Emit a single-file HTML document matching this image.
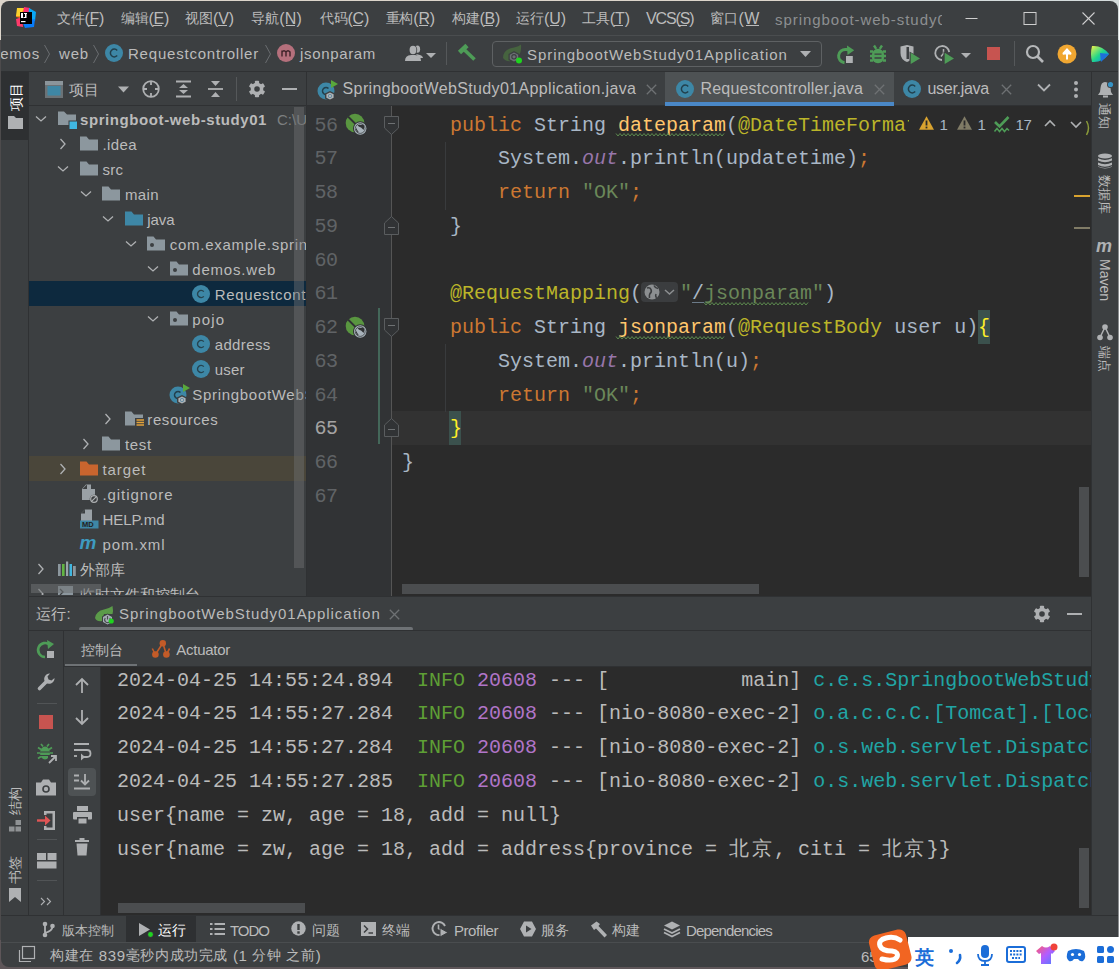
<!DOCTYPE html>
<html><head><meta charset="utf-8">
<style>
*{margin:0;padding:0;box-sizing:border-box}
html,body{width:1119px;height:969px;overflow:hidden;background:#dcd5cb}
body{position:relative;font-family:"Liberation Sans",sans-serif;color:#bbbbbb}
.a{position:absolute;overflow:visible}
.t{position:absolute;white-space:nowrap}
.m{font-family:"Liberation Mono",monospace;white-space:pre}
</style></head><body>
<div class="a" style="left:0px;top:0px;width:1119px;height:969px;background:#5e5659"></div>
<div class="a" style="left:0px;top:0px;width:1119px;height:40px;background:#dcd5cb"></div>
<div class="a" style="left:820px;top:0px;width:299px;height:40px;background:#d5dcdc"></div>
<div class="a" style="left:0px;top:40px;width:1px;height:900px;background:#4d4b4c"></div>
<div class="a" style="left:1118px;top:40px;width:1px;height:900px;background:#8a8d8f"></div>
<div class="a" style="left:1px;top:1px;width:1117px;height:966px;background:#3c3f41;border-radius:8px"></div>
<div class="a" style="left:1px;top:35px;width:1117px;height:1px;background:#4a4d4f"></div>
<svg class="a" style="left:15px;top:7px" width="22" height="22" viewBox="0 0 22 22">
<polygon points="3,2 11,1 14,6 6,11 1,10" fill="#fc8a1c"/>
<polygon points="2,1 9,1 5,9 1,9" fill="#fcd22e"/>
<polygon points="9,0 15,1 16,7 8,9" fill="#fe2e71"/>
<polygon points="14,1 21,5 20,14 13,12" fill="#0aa8f5"/>
<polygon points="1,12 7,10 8,20 2,19" fill="#fe3a6a"/>
<polygon points="7,14 20,12 19,20 10,21" fill="#087cfa"/>
<rect x="5" y="5" width="12" height="12" fill="#000"/>
<rect x="6" y="6" width="2" height="5" fill="#fff"/><rect x="9" y="6" width="3" height="1" fill="#fff"/>
<rect x="10" y="6" width="1.5" height="5" fill="#fff"/><rect x="8.5" y="10" width="2.5" height="1" fill="#fff"/>
<rect x="6" y="14" width="4.5" height="1.2" fill="#fff"/>
</svg>
<div class="t" style="left:57.00px;top:6.66px;font-size:16px;color:#bbbbbb;line-height:24px;letter-spacing:-0.286px"><span style="font-size:14px;position:relative;top:-0.5px">文件</span>(F)</div>
<div class="a" style="left:88px;top:25px;width:9px;height:1px;background:#bbbbbb"></div>
<div class="t" style="left:121.00px;top:6.66px;font-size:16px;color:#bbbbbb;line-height:24px;letter-spacing:-0.266px"><span style="font-size:14px;position:relative;top:-0.5px">编辑</span>(E)</div>
<div class="a" style="left:153px;top:25px;width:9px;height:1px;background:#bbbbbb"></div>
<div class="t" style="left:185.00px;top:6.66px;font-size:16px;color:#bbbbbb;line-height:24px;letter-spacing:-0.066px"><span style="font-size:14px;position:relative;top:-0.5px">视图</span>(V)</div>
<div class="a" style="left:218px;top:25px;width:9px;height:1px;background:#bbbbbb"></div>
<div class="t" style="left:251.00px;top:6.66px;font-size:16px;color:#bbbbbb;line-height:24px;letter-spacing:0.158px"><span style="font-size:14px;position:relative;top:-0.5px">导航</span>(N)</div>
<div class="a" style="left:286px;top:25px;width:9px;height:1px;background:#bbbbbb"></div>
<div class="t" style="left:320.00px;top:6.66px;font-size:16px;color:#bbbbbb;line-height:24px;letter-spacing:-0.242px"><span style="font-size:14px;position:relative;top:-0.5px">代码</span>(C)</div>
<div class="a" style="left:353px;top:25px;width:9px;height:1px;background:#bbbbbb"></div>
<div class="t" style="left:385.50px;top:6.66px;font-size:16px;color:#bbbbbb;line-height:24px;letter-spacing:-0.142px"><span style="font-size:14px;position:relative;top:-0.5px">重构</span>(R)</div>
<div class="a" style="left:419px;top:25px;width:9px;height:1px;background:#bbbbbb"></div>
<div class="t" style="left:452.00px;top:6.66px;font-size:16px;color:#bbbbbb;line-height:24px;letter-spacing:-0.266px"><span style="font-size:14px;position:relative;top:-0.5px">构建</span>(B)</div>
<div class="a" style="left:484px;top:25px;width:9px;height:1px;background:#bbbbbb"></div>
<div class="t" style="left:516.00px;top:6.66px;font-size:16px;color:#bbbbbb;line-height:24px;letter-spacing:-0.042px"><span style="font-size:14px;position:relative;top:-0.5px">运行</span>(U)</div>
<div class="a" style="left:550px;top:25px;width:9px;height:1px;background:#bbbbbb"></div>
<div class="t" style="left:582.00px;top:6.66px;font-size:16px;color:#bbbbbb;line-height:24px;letter-spacing:-0.086px"><span style="font-size:14px;position:relative;top:-0.5px">工具</span>(T)</div>
<div class="a" style="left:614px;top:25px;width:9px;height:1px;background:#bbbbbb"></div>
<div class="t" style="left:646.00px;top:6.66px;font-size:16px;color:#bbbbbb;line-height:24px;letter-spacing:-1.122px">VCS(S)</div>
<div class="a" style="left:678px;top:25px;width:9px;height:1px;background:#bbbbbb"></div>
<div class="t" style="left:710.00px;top:6.66px;font-size:16px;color:#bbbbbb;line-height:24px;letter-spacing:0.268px"><span style="font-size:14px;position:relative;top:-0.5px">窗口</span>(W</div>
<div class="a" style="left:746px;top:25px;width:13px;height:1px;background:#bbbbbb"></div>
<div style="position:absolute;left:774px;top:0;width:168px;height:35px;overflow:hidden">
<div class="t" style="left:1.00px;top:7.60px;font-size:15px;color:#8d8f91;line-height:24px;letter-spacing:0.950px">springboot-web-study01</div>
</div>
<svg class="a" style="left:960px;top:10px" width="140" height="16" viewBox="0 0 140 16">
<line x1="5.5" y1="8.5" x2="17.5" y2="8.5" stroke="#cfcfcf" stroke-width="1"/>
<rect x="64" y="2.5" width="12" height="12" fill="none" stroke="#cfcfcf" stroke-width="1"/>
<line x1="122.5" y1="2.5" x2="134.5" y2="14.5" stroke="#cfcfcf" stroke-width="1.1"/>
<line x1="134.5" y1="2.5" x2="122.5" y2="14.5" stroke="#cfcfcf" stroke-width="1.1"/>
</svg>
<div class="a" style="left:1px;top:71px;width:1117px;height:1px;background:#2f3133"></div>
<div style="position:absolute;left:1px;top:36px;width:400px;height:35px;overflow:hidden">
<div class="t" style="left:-10.00px;top:5.70px;font-size:15px;color:#bbbbbb;line-height:24px;letter-spacing:0.795px">demos</div>
</div>
<svg class="a" style="left:43px;top:44px" width="8" height="20" viewBox="0 0 8 20"><polyline points="1.5,1 6.5,10 1.5,19" fill="none" stroke="#6a6d70" stroke-width="1"/></svg>
<div class="t" style="left:59.00px;top:41.70px;font-size:15px;color:#bbbbbb;line-height:24px;letter-spacing:0.827px">web</div>
<svg class="a" style="left:92px;top:44px" width="8" height="20" viewBox="0 0 8 20"><polyline points="1.5,1 6.5,10 1.5,19" fill="none" stroke="#6a6d70" stroke-width="1"/></svg>
<svg class="a" style="left:105px;top:44.2px" width="18" height="18" viewBox="0 0 18 18"><circle cx="9" cy="9" r="9" fill="#3d87a6"/><path d="M12.2,6.4 A3.9,3.9 0 1,0 12.2,11.6" fill="none" stroke="#22404d" stroke-width="1.5"/></svg>
<div class="t" style="left:128.00px;top:41.70px;font-size:15px;color:#bbbbbb;line-height:24px;letter-spacing:0.790px">Requestcontroller</div>
<svg class="a" style="left:264px;top:44px" width="8" height="20" viewBox="0 0 8 20"><polyline points="1.5,1 6.5,10 1.5,19" fill="none" stroke="#6a6d70" stroke-width="1"/></svg>
<svg class="a" style="left:277px;top:44.2px" width="18" height="18" viewBox="0 0 18 18"><circle cx="9" cy="9" r="9" fill="#b5707c"/><path d="M5,12.5 V6.5 M5,8 Q7,5.5 9,8 V12.5 M9,8 Q11,5.5 13,8 V12.5" fill="none" stroke="#3f2329" stroke-width="1.4"/></svg>
<div class="t" style="left:300.00px;top:41.70px;font-size:15px;color:#bbbbbb;line-height:24px;letter-spacing:0.663px">jsonparam</div>
<svg class="a" style="left:404px;top:45px" width="34" height="18" viewBox="0 0 34 18">
<ellipse cx="13.5" cy="4.2" rx="2.6" ry="3.6" fill="#aeb0b2"/><path d="M12,9 Q19,10 19,13 H15 Z" fill="#aeb0b2"/>
<ellipse cx="9" cy="5" rx="4.2" ry="4.8" fill="#3c3f41"/>
<ellipse cx="9" cy="5" rx="3.4" ry="4.2" fill="#aeb0b2"/><path d="M1,16 Q1,10.5 7,10 H11 Q17,10.5 17,16 Z" fill="#aeb0b2"/>
<polygon points="22,8 32,8 27,13" fill="#aeb0b2"/>
</svg>
<div class="a" style="left:446px;top:42px;width:1px;height:23px;background:#55585a"></div>
<svg class="a" style="left:456px;top:44px" width="22" height="20" viewBox="0 0 22 20"><path d="M3.5,8.5 L11,1.5" stroke="#4e9c57" stroke-width="4.6" stroke-linecap="butt"/><path d="M7.5,5 L18.5,15.5" stroke="#4e9c57" stroke-width="3.6"/></svg>
<div class="a" style="left:492px;top:41px;width:330px;height:26px;background:transparent;border:1px solid #5e6163;border-radius:4px"></div>
<svg class="a" style="left:502px;top:44px" width="22" height="20" viewBox="0 0 22 20">
<path d="M1,14 Q1,5 12,3.5 Q17,2.5 19,0.5 Q20,10 14,15 Q8,19 3,16 Z" fill="#46633f"/>
<polygon points="12,7 17.5,10 17.5,16 12,19 6.5,16 6.5,10" fill="#3c3f41"/>
<polygon points="12,8.5 16.2,10.8 16.2,15.2 12,17.5 7.8,15.2 7.8,10.8" fill="#6b7073"/>
<circle cx="12" cy="12.8" r="2.2" fill="none" stroke="#3c3f41" stroke-width="1.1"/>
<circle cx="17" cy="16.5" r="3" fill="#1fd41f"/></svg>
<div class="t" style="left:527.00px;top:42.70px;font-size:15px;color:#bbbbbb;line-height:24px;letter-spacing:0.941px">SpringbootWebStudy01Application</div>
<svg class="a" style="left:800px;top:50px" width="12" height="8" viewBox="0 0 12 8"><polygon points="0,1 11,1 5.5,7" fill="#aeb0b2"/></svg>
<svg class="a" style="left:834px;top:44px" width="22" height="21" viewBox="0 0 22 21">
<path d="M10.5,18.7 A6.5,6.5 0 0,1 12,5.5 L14,5.5" fill="none" stroke="#4e9c57" stroke-width="3"/>
<polygon points="13,1.5 20.2,6.2 13.5,11" fill="#4e9c57"/>
<rect x="12" y="12" width="6.8" height="7" fill="#afb1b3"/>
</svg>
<svg class="a" style="left:867px;top:44px" width="22" height="21" viewBox="0 0 22 21">
<ellipse cx="11" cy="12" rx="6.3" ry="7.3" fill="#4e9c57"/>
<path d="M3,7.5 H6 M19,7.5 H16 M3,12 H6 M19,12 H16 M3,16.5 H6 M19,16.5 H16 M7,1.5 L9.2,4.8 M15,1.5 L12.8,4.8" stroke="#4e9c57" stroke-width="2.4"/>
<path d="M7.5,10.2 H14.5 M7.5,14 H14.5" stroke="#3c3f41" stroke-width="1.3"/>
</svg>
<svg class="a" style="left:899px;top:44px" width="22" height="21" viewBox="0 0 22 21">
<path d="M1.5,2.5 L8,1 L14.5,2.5 V9 Q14.5,15.5 8,18 Q1.5,15.5 1.5,9 Z" fill="#afb1b3"/>
<rect x="7.5" y="3" width="2.5" height="12" fill="#3c3f41"/>
<polygon points="10.5,7.5 21.5,14 10.5,20.5" fill="#3c3f41"/>
<polygon points="11.7,8.8 21,14.5 11.7,20" fill="#4e9c57"/>
</svg>
<svg class="a" style="left:933px;top:44px" width="40" height="21" viewBox="0 0 40 21">
<path d="M9,16 A7,7 0 1,1 16.2,8" fill="none" stroke="#afb1b3" stroke-width="1.8"/>
<path d="M10.5,5 L10.5,9.5 L8,12.5" fill="none" stroke="#afb1b3" stroke-width="1.5"/>
<polygon points="10.5,7.5 21.5,14 10.5,20.5" fill="#3c3f41"/>
<polygon points="11.7,8.8 21,14.5 11.7,20" fill="#4e9c57"/>
<polygon points="28,9 38,9 33,14" fill="#afb1b3"/>
</svg>
<div class="a" style="left:987px;top:47px;width:13px;height:13px;background:#c75450"></div>
<div class="a" style="left:1014px;top:41px;width:1px;height:25px;background:#55585a"></div>
<svg class="a" style="left:1025px;top:44px" width="22" height="20" viewBox="0 0 22 20"><circle cx="8" cy="8" r="6" fill="none" stroke="#b6b8ba" stroke-width="2.2"/><path d="M12.5,12.5 L18,18" stroke="#b6b8ba" stroke-width="2.6"/></svg>
<svg class="a" style="left:1057px;top:44px" width="20" height="20" viewBox="0 0 20 20"><circle cx="10" cy="10" r="9.5" fill="#f0a732"/><path d="M10,15.5 V6.5 M6,10 L10,5.5 L14,10" fill="none" stroke="#fff" stroke-width="2"/><polygon points="5.5,10.5 10,5 14.5,10.5" fill="#fff"/></svg>
<svg class="a" style="left:1090px;top:44px" width="20" height="20" viewBox="0 0 20 20">
<defs><linearGradient id="tb" x1="0" y1="0" x2="1" y2="1"><stop offset="0" stop-color="#f5f04a"/><stop offset="0.5" stop-color="#21d789"/><stop offset="1" stop-color="#087cfa"/></linearGradient></defs>
<path d="M2,2 Q12,1 19,10 Q12,19 2,18 Q0,10 2,2 Z" fill="url(#tb)"/>
<path d="M10,9 L19,10 L11,18 Z" fill="#1f6fd8"/>
</svg>
<div class="a" style="left:28px;top:72px;width:1px;height:844px;background:#2f3133"></div>
<div class="a" style="left:1px;top:72px;width:27px;height:68px;background:#2e3032"></div>
<div class="t" style="left:16.5px;top:96.5px;width:0;height:0"><div style="position:absolute;left:0;top:0;transform:translate(-50%,-50%) rotate(-90deg);font-size:13.5px;line-height:15.5px;color:#ffffff;white-space:nowrap"><span style="font-size:13.5px;position:relative;top:-0.5px">项目</span></div></div>
<svg class="a" style="left:8px;top:116px" width="15" height="13" viewBox="0 0 15 13"><path d="M0,0 H6 L8,2 H15 V13 H0 Z" fill="#afb1b3"/></svg>
<div class="t" style="left:16px;top:800.5px;width:0;height:0"><div style="position:absolute;left:0;top:0;transform:translate(-50%,-50%) rotate(-90deg);font-size:13.5px;line-height:15.5px;color:#bbbbbb;white-space:nowrap"><span style="font-size:13.5px;position:relative;top:-0.5px">结构</span></div></div>
<svg class="a" style="left:9px;top:820px" width="13" height="12" viewBox="0 0 13 12"><rect x="6.5" y="0" width="5.5" height="5" fill="#8f9294"/><rect x="0" y="6.5" width="5.5" height="5" fill="#8f9294"/><rect x="6.5" y="6.5" width="5.5" height="5" fill="#8f9294"/></svg>
<div class="t" style="left:16px;top:869.5px;width:0;height:0"><div style="position:absolute;left:0;top:0;transform:translate(-50%,-50%) rotate(-90deg);font-size:13.5px;line-height:15.5px;color:#bbbbbb;white-space:nowrap"><span style="font-size:13.5px;position:relative;top:-0.5px">书签</span></div></div>
<svg class="a" style="left:9px;top:888px" width="13" height="14" viewBox="0 0 13 14"><path d="M0,0 H12 V14 L6,9 L0,14 Z" fill="#afb1b3"/></svg>
<div class="a" style="left:29px;top:105px;width:277px;height:1px;background:#2f3133"></div>
<svg class="a" style="left:45px;top:81px" width="18" height="17" viewBox="0 0 18 17"><rect x="0" y="0" width="18" height="17" fill="#6b7276"/><rect x="0" y="0" width="18" height="4" fill="#8b959b"/><rect x="2.5" y="5" width="13" height="9.5" fill="#3e87a5"/></svg>
<div class="t" style="left:69.00px;top:78.30px;font-size:15px;color:#bbbbbb;line-height:24px"><span style="font-size:14.5px;position:relative;top:-0.5px">项目</span></div>
<svg class="a" style="left:118px;top:86px" width="12" height="8" viewBox="0 0 12 8"><polygon points="0,0.5 11,0.5 5.5,6.5" fill="#aeb0b2"/></svg>
<svg class="a" style="left:141px;top:79px" width="20" height="20" viewBox="0 0 20 20"><circle cx="10" cy="10" r="7.8" fill="none" stroke="#aeb0b2" stroke-width="1.8"/><path d="M10,2 V6 M10,14 V18 M2,10 H6 M14,10 H18" stroke="#aeb0b2" stroke-width="1.8"/></svg>
<svg class="a" style="left:175px;top:79px" width="18" height="20" viewBox="0 0 18 20"><path d="M1,2.5 H16 M1,17.5 H16" stroke="#aeb0b2" stroke-width="1.8"/><polygon points="8.5,5 13,9 4,9" fill="#aeb0b2"/><polygon points="8.5,15 13,11 4,11" fill="#aeb0b2"/></svg>
<svg class="a" style="left:207px;top:79px" width="18" height="20" viewBox="0 0 18 20"><path d="M1,10 H16" stroke="#aeb0b2" stroke-width="1.8"/><polygon points="8.5,7 13,2 4,2" fill="#aeb0b2"/><polygon points="8.5,13 13,18 4,18" fill="#aeb0b2"/></svg>
<div class="a" style="left:236px;top:77px;width:1px;height:24px;background:#55585a"></div>
<svg class="a" style="left:247px;top:79px" width="20" height="20" viewBox="0 0 20 20"><g transform="translate(10 10)"><rect x="-2.1" y="-8.2" width="4.2" height="5" rx="0.8" fill="#aeb0b2" transform="rotate(0)"/><rect x="-2.1" y="-8.2" width="4.2" height="5" rx="0.8" fill="#aeb0b2" transform="rotate(60)"/><rect x="-2.1" y="-8.2" width="4.2" height="5" rx="0.8" fill="#aeb0b2" transform="rotate(120)"/><rect x="-2.1" y="-8.2" width="4.2" height="5" rx="0.8" fill="#aeb0b2" transform="rotate(180)"/><rect x="-2.1" y="-8.2" width="4.2" height="5" rx="0.8" fill="#aeb0b2" transform="rotate(240)"/><rect x="-2.1" y="-8.2" width="4.2" height="5" rx="0.8" fill="#aeb0b2" transform="rotate(300)"/><circle cx="0" cy="0" r="6.3" fill="#aeb0b2"/><circle cx="0" cy="0" r="2.8" fill="#3c3f41"/></g></svg>
<div class="a" style="left:282px;top:88px;width:15px;height:2.4px;background:#aeb0b2"></div>
<div class="a" style="left:29px;top:281px;width:277px;height:25px;background:#0d293e"></div>
<div class="a" style="left:29px;top:456px;width:277px;height:25px;background:#4a463a"></div>
<div style="position:absolute;left:29px;top:106px;width:277px;height:489px;overflow:hidden">
<svg class="a" style="left:5.899999999999999px;top:8.5px" width="12" height="8" viewBox="0 0 12 8"><polyline points="1,1.5 6,6 11,1.5" fill="none" stroke="#afb1b3" stroke-width="1.3"/></svg>
<svg class="a" style="left:28.5px;top:4.5px" width="20" height="19" viewBox="0 0 20 19"><path d="M0,0.5 H6 L9,3.5 H18 V14 H0 Z" fill="#8c979e"/><rect x="10.5" y="9.5" width="9" height="9" fill="#3c3f41"/><rect x="11.5" y="10.5" width="7.5" height="7.5" fill="#40b6e0"/></svg>
<div class="t" style="left:51.00px;top:2.30px;font-size:15px;color:#bbbbbb;line-height:24px;letter-spacing:0.583px;font-weight:bold">springboot-web-study01</div>
<div class="t" style="left:248.00px;top:2.30px;font-size:15px;color:#7d7f80;line-height:24px">C:\Users\zw\IdeaProjects</div>
<svg class="a" style="left:30.349999999999994px;top:31.5px" width="8" height="12" viewBox="0 0 8 12"><polyline points="1.5,1 6,6 1.5,11" fill="none" stroke="#afb1b3" stroke-width="1.3"/></svg>
<svg class="a" style="left:50.95px;top:30.0px" width="19" height="15" viewBox="0 0 19 15"><path d="M0,0.5 H6.5 L9,3.5 H18 V14.5 H0 Z" fill="#8c979e"/></svg>
<div class="t" style="left:73.45px;top:27.30px;font-size:15px;color:#bbbbbb;line-height:24px;letter-spacing:0.414px">.idea</div>
<svg class="a" style="left:28.349999999999994px;top:58.5px" width="12" height="8" viewBox="0 0 12 8"><polyline points="1,1.5 6,6 11,1.5" fill="none" stroke="#afb1b3" stroke-width="1.3"/></svg>
<svg class="a" style="left:50.95px;top:55.0px" width="19" height="15" viewBox="0 0 19 15"><path d="M0,0.5 H6.5 L9,3.5 H18 V14.5 H0 Z" fill="#8c979e"/></svg>
<div class="t" style="left:73.45px;top:52.30px;font-size:15px;color:#bbbbbb;line-height:24px;letter-spacing:0.335px">src</div>
<svg class="a" style="left:50.8px;top:83.5px" width="12" height="8" viewBox="0 0 12 8"><polyline points="1,1.5 6,6 11,1.5" fill="none" stroke="#afb1b3" stroke-width="1.3"/></svg>
<svg class="a" style="left:73.4px;top:80.0px" width="19" height="15" viewBox="0 0 19 15"><path d="M0,0.5 H6.5 L9,3.5 H18 V14.5 H0 Z" fill="#8c979e"/></svg>
<div class="t" style="left:95.90px;top:77.30px;font-size:15px;color:#bbbbbb;line-height:24px;letter-spacing:0.372px">main</div>
<svg class="a" style="left:73.25px;top:108.5px" width="12" height="8" viewBox="0 0 12 8"><polyline points="1,1.5 6,6 11,1.5" fill="none" stroke="#afb1b3" stroke-width="1.3"/></svg>
<svg class="a" style="left:95.85px;top:105.0px" width="19" height="15" viewBox="0 0 19 15"><path d="M0,0.5 H6.5 L9,3.5 H18 V14.5 H0 Z" fill="#3e87a6"/></svg>
<div class="t" style="left:118.35px;top:102.30px;font-size:15px;color:#bbbbbb;line-height:24px;letter-spacing:-0.129px">java</div>
<svg class="a" style="left:95.69999999999999px;top:133.5px" width="12" height="8" viewBox="0 0 12 8"><polyline points="1,1.5 6,6 11,1.5" fill="none" stroke="#afb1b3" stroke-width="1.3"/></svg>
<svg class="a" style="left:118.30000000000001px;top:130.0px" width="19" height="15" viewBox="0 0 19 15"><path d="M0,0.5 H6.5 L9,3.5 H18 V14.5 H0 Z" fill="#8c979e"/><circle cx="5" cy="9" r="2" fill="#3c3f41"/></svg>
<div class="t" style="left:140.80px;top:127.30px;font-size:15px;color:#bbbbbb;line-height:24px;letter-spacing:0.710px">com.example.springbootwebstudy01</div>
<svg class="a" style="left:118.15px;top:158.5px" width="12" height="8" viewBox="0 0 12 8"><polyline points="1,1.5 6,6 11,1.5" fill="none" stroke="#afb1b3" stroke-width="1.3"/></svg>
<svg class="a" style="left:140.75px;top:155.0px" width="19" height="15" viewBox="0 0 19 15"><path d="M0,0.5 H6.5 L9,3.5 H18 V14.5 H0 Z" fill="#8c979e"/><circle cx="5" cy="9" r="2" fill="#3c3f41"/></svg>
<div class="t" style="left:163.25px;top:152.30px;font-size:15px;color:#bbbbbb;line-height:24px;letter-spacing:0.810px">demos.web</div>
<svg class="a" style="left:163.2px;top:178.5px" width="18" height="18" viewBox="0 0 18 18"><circle cx="9" cy="9" r="9" fill="#3d87a6"/><path d="M11.8,6.6 A3.6,3.6 0 1,0 11.8,11.4" fill="none" stroke="#26434f" stroke-width="1.4"/></svg>
<div class="t" style="left:185.70px;top:177.30px;font-size:15px;color:#bbbbbb;line-height:24px;letter-spacing:0.645px">Requestcontroller</div>
<svg class="a" style="left:118.15px;top:208.5px" width="12" height="8" viewBox="0 0 12 8"><polyline points="1,1.5 6,6 11,1.5" fill="none" stroke="#afb1b3" stroke-width="1.3"/></svg>
<svg class="a" style="left:140.75px;top:205.0px" width="19" height="15" viewBox="0 0 19 15"><path d="M0,0.5 H6.5 L9,3.5 H18 V14.5 H0 Z" fill="#8c979e"/><circle cx="5" cy="9" r="2" fill="#3c3f41"/></svg>
<div class="t" style="left:163.25px;top:202.30px;font-size:15px;color:#bbbbbb;line-height:24px;letter-spacing:1.160px">pojo</div>
<svg class="a" style="left:163.2px;top:228.5px" width="18" height="18" viewBox="0 0 18 18"><circle cx="9" cy="9" r="9" fill="#3d87a6"/><path d="M11.8,6.6 A3.6,3.6 0 1,0 11.8,11.4" fill="none" stroke="#26434f" stroke-width="1.4"/></svg>
<div class="t" style="left:185.70px;top:227.30px;font-size:15px;color:#bbbbbb;line-height:24px;letter-spacing:0.376px">address</div>
<svg class="a" style="left:163.2px;top:253.5px" width="18" height="18" viewBox="0 0 18 18"><circle cx="9" cy="9" r="9" fill="#3d87a6"/><path d="M11.8,6.6 A3.6,3.6 0 1,0 11.8,11.4" fill="none" stroke="#26434f" stroke-width="1.4"/></svg>
<div class="t" style="left:185.70px;top:252.30px;font-size:15px;color:#bbbbbb;line-height:24px;letter-spacing:0.205px">user</div>
<svg class="a" style="left:139.75px;top:276.5px" width="22" height="22" viewBox="0 0 22 22"><circle cx="9" cy="12" r="8.5" fill="#3d87a6"/><path d="M11.5,9.5 A3.5,3.5 0 1,0 11.5,14.5" fill="none" stroke="#22404d" stroke-width="1.6"/><polygon points="14,1 21,5 14,9" fill="#59a83b"/><polygon points="13,12 18,14.5 18,19.5 13,22 8,19.5 8,14.5" fill="#3c3f41"/><polygon points="13,13.5 16.6,15.3 16.6,18.8 13,20.5 9.4,18.8 9.4,15.3" fill="#aeb4b8"/><circle cx="13" cy="17" r="1.7" fill="none" stroke="#5d88a0" stroke-width="0.9"/></svg>
<div class="t" style="left:163.25px;top:277.30px;font-size:15px;color:#bbbbbb;line-height:24px;letter-spacing:0.698px">SpringbootWebStudy01Application</div>
<svg class="a" style="left:75.25px;top:306.5px" width="8" height="12" viewBox="0 0 8 12"><polyline points="1.5,1 6,6 1.5,11" fill="none" stroke="#afb1b3" stroke-width="1.3"/></svg>
<svg class="a" style="left:95.85px;top:305.0px" width="19" height="15" viewBox="0 0 19 15"><path d="M0,0.5 H6.5 L9,3.5 H18 V14.5 H0 Z" fill="#8c979e"/><rect x="10" y="7" width="10" height="9" fill="#3c3f41"/><path d="M11.5,9 H19 M11.5,11.5 H19 M11.5,14 H19" stroke="#e3a23a" stroke-width="1.4"/></svg>
<div class="t" style="left:118.35px;top:302.30px;font-size:15px;color:#bbbbbb;line-height:24px;letter-spacing:0.571px">resources</div>
<svg class="a" style="left:52.8px;top:331.5px" width="8" height="12" viewBox="0 0 8 12"><polyline points="1.5,1 6,6 1.5,11" fill="none" stroke="#afb1b3" stroke-width="1.3"/></svg>
<svg class="a" style="left:73.4px;top:330.0px" width="19" height="15" viewBox="0 0 19 15"><path d="M0,0.5 H6.5 L9,3.5 H18 V14.5 H0 Z" fill="#8c979e"/></svg>
<div class="t" style="left:95.90px;top:327.30px;font-size:15px;color:#bbbbbb;line-height:24px;letter-spacing:0.706px">test</div>
<svg class="a" style="left:30.349999999999994px;top:356.5px" width="8" height="12" viewBox="0 0 8 12"><polyline points="1.5,1 6,6 1.5,11" fill="none" stroke="#afb1b3" stroke-width="1.3"/></svg>
<svg class="a" style="left:50.95px;top:355.0px" width="19" height="15" viewBox="0 0 19 15"><path d="M0,0.5 H6.5 L9,3.5 H18 V14.5 H0 Z" fill="#c9652e"/></svg>
<div class="t" style="left:73.45px;top:352.30px;font-size:15px;color:#bbbbbb;line-height:24px;letter-spacing:0.940px">target</div>
<svg class="a" style="left:52.95px;top:377.5px" width="18" height="20" viewBox="0 0 18 20"><path d="M4,0.5 H9 V5 H13 V16 H0 V5 Z" fill="#9aa1a6"/><path d="M5,0.5 L0.5,5 H5 Z" fill="#3c3f41"/><circle cx="12" cy="15" r="4.3" fill="#3c3f41"/><circle cx="12" cy="15" r="3.3" fill="none" stroke="#aeb0b2" stroke-width="1.2"/><path d="M9.8,17.2 L14.2,12.8" stroke="#aeb0b2" stroke-width="1.2"/></svg>
<div class="t" style="left:73.45px;top:377.30px;font-size:15px;color:#bbbbbb;line-height:24px;letter-spacing:0.929px">.gitignore</div>
<svg class="a" style="left:50.95px;top:402.5px" width="19" height="20" viewBox="0 0 19 20"><path d="M5,0.5 H12 V12 H1 V4.5 Z" fill="#9aa1a6"/><path d="M5,0.5 L1,4.5 H5 Z" fill="#3c3f41"/><rect x="0" y="11.5" width="18.5" height="8" fill="#3e87a6"/><text x="2" y="18.3" font-size="7.5" font-family="Liberation Sans" font-weight="bold" fill="#222">MD</text></svg>
<div class="t" style="left:73.45px;top:402.30px;font-size:15px;color:#bbbbbb;line-height:24px;letter-spacing:-0.027px">HELP.md</div>
<svg class="a" style="left:50.95px;top:428.5px" width="19" height="18" viewBox="0 0 19 18"><text x="-0.5" y="14" font-size="19" font-family="Liberation Sans" font-weight="bold" font-style="italic" fill="#3e9bc0">m</text></svg>
<div class="t" style="left:73.45px;top:427.30px;font-size:15px;color:#bbbbbb;line-height:24px;letter-spacing:0.903px">pom.xml</div>
<svg class="a" style="left:7.899999999999999px;top:456.5px" width="8" height="12" viewBox="0 0 8 12"><polyline points="1.5,1 6,6 1.5,11" fill="none" stroke="#afb1b3" stroke-width="1.3"/></svg>
<svg class="a" style="left:28.5px;top:454.5px" width="19" height="16" viewBox="0 0 19 16"><rect x="0" y="3" width="2.7" height="12" fill="#8c979e"/><rect x="4" y="3" width="2.6" height="12" fill="#62b543"/><rect x="8" y="0.5" width="2.2" height="14.5" fill="#9aa5ab"/><rect x="11.5" y="3" width="2.5" height="12" fill="#40b6e0"/><rect x="15" y="5" width="2.8" height="10" fill="#8c979e"/></svg>
<div class="t" style="left:51.00px;top:452.30px;font-size:15px;color:#bbbbbb;line-height:24px;letter-spacing:-0.033px"><span style="font-size:14.7px;position:relative;top:-0.5px">外部库</span></div>
<svg class="a" style="left:7.899999999999999px;top:481.5px" width="8" height="12" viewBox="0 0 8 12"><polyline points="1.5,1 6,6 1.5,11" fill="none" stroke="#afb1b3" stroke-width="1.3"/></svg>
<svg class="a" style="left:28.5px;top:479.5px" width="19" height="19" viewBox="0 0 19 19"><rect x="0" y="0" width="15" height="14" fill="#8c979e"/><polyline points="2,3 5,6 2,9" fill="none" stroke="#3c3f41" stroke-width="1.3"/><circle cx="14" cy="17" r="6" fill="#40b6e0"/></svg>
<div class="t" style="left:51.00px;top:477.30px;font-size:15px;color:#bbbbbb;line-height:24px"><span style="font-size:14.7px;position:relative;top:-0.5px">临时文件和控制台</span></div>
<div class="a" style="left:265px;top:1px;width:10px;height:461px;background:rgba(110,113,115,0.45)"></div>
<div class="a" style="left:2px;top:478px;width:70px;height:9px;background:rgba(110,113,115,0.55)"></div>
</div>
<div class="a" style="left:306px;top:72px;width:1px;height:525px;background:#2f3133"></div>
<div class="a" style="left:1091px;top:72px;width:1px;height:844px;background:#2f3133"></div>
<div class="a" style="left:29px;top:596px;width:1062px;height:1px;background:#2f3133"></div>
<div class="a" style="left:307px;top:105px;width:784px;height:1px;background:#2f3133"></div>
<div class="a" style="left:665px;top:72px;width:229px;height:33px;background:#4e5254"></div>
<div class="a" style="left:665px;top:102px;width:229px;height:4px;background:#4a88c7"></div>
<svg class="a" style="left:317px;top:79px" width="22" height="23" viewBox="0 0 22 23"><circle cx="9" cy="12" r="8.5" fill="#3d87a6"/><path d="M11.5,9.5 A3.5,3.5 0 1,0 11.5,14.5" fill="none" stroke="#22404d" stroke-width="1.6"/><polygon points="14,1 21,5 14,9" fill="#59a83b"/><polygon points="13,12 18,14.5 18,19.5 13,22 8,19.5 8,14.5" fill="#3c3f41"/><polygon points="13,13.5 16.6,15.3 16.6,18.8 13,20.5 9.4,18.8 9.4,15.3" fill="#aeb4b8"/><circle cx="13" cy="17" r="1.7" fill="none" stroke="#5d88a0" stroke-width="0.9"/></svg>
<div class="t" style="left:342.60px;top:77.26px;font-size:16px;color:#bbbbbb;line-height:24px;letter-spacing:0.359px">SpringbootWebStudy01Application.java</div>
<svg class="a" style="left:646px;top:84.0px" width="11" height="11" viewBox="0 0 11 11"><path d="M0.8,0.8 L10.2,10.2 M10.2,0.8 L0.8,10.2" stroke="#6e7173" stroke-width="1.3"/></svg>
<svg class="a" style="left:676px;top:80px" width="18" height="18" viewBox="0 0 18 18"><circle cx="9" cy="9" r="9" fill="#3d87a6"/><path d="M12.2,6.4 A3.9,3.9 0 1,0 12.2,11.6" fill="none" stroke="#22404d" stroke-width="1.5"/></svg>
<div class="t" style="left:700.50px;top:77.26px;font-size:16px;color:#bbbbbb;line-height:24px;letter-spacing:0.195px">Requestcontroller.java</div>
<svg class="a" style="left:873.5px;top:84.0px" width="11" height="11" viewBox="0 0 11 11"><path d="M0.8,0.8 L10.2,10.2 M10.2,0.8 L0.8,10.2" stroke="#6e7173" stroke-width="1.3"/></svg>
<svg class="a" style="left:903px;top:80px" width="18" height="18" viewBox="0 0 18 18"><circle cx="9" cy="9" r="9" fill="#3d87a6"/><path d="M12.2,6.4 A3.9,3.9 0 1,0 12.2,11.6" fill="none" stroke="#22404d" stroke-width="1.5"/></svg>
<div class="t" style="left:927.50px;top:77.26px;font-size:16px;color:#bbbbbb;line-height:24px;letter-spacing:-0.303px">user.java</div>
<svg class="a" style="left:1000.5px;top:84.0px" width="11" height="11" viewBox="0 0 11 11"><path d="M0.8,0.8 L10.2,10.2 M10.2,0.8 L0.8,10.2" stroke="#6e7173" stroke-width="1.3"/></svg>
<svg class="a" style="left:1037px;top:83px" width="14" height="9" viewBox="0 0 14 9"><polyline points="1,1.5 7,7.5 13,1.5" fill="none" stroke="#afb1b3" stroke-width="1.8"/></svg>
<svg class="a" style="left:1072px;top:80px" width="8" height="19" viewBox="0 0 8 19"><circle cx="4" cy="3" r="2" fill="#afb1b3"/><circle cx="4" cy="9.5" r="2" fill="#afb1b3"/><circle cx="4" cy="16" r="2" fill="#afb1b3"/></svg>
<div class="a" style="left:307px;top:106px;width:85px;height:490px;background:#313335"></div>
<div class="a" style="left:392px;top:106px;width:699px;height:490px;background:#2b2b2b"></div>
<div class="a" style="left:392px;top:411px;width:699px;height:34px;background:#323232"></div>
<div class="t m" style="left:314.50px;top:108.58px;font-size:20px;line-height:34px;letter-spacing:-0.6px"><span style="color:#606366">56</span></div>
<div class="t m" style="left:314.50px;top:142.34px;font-size:20px;line-height:34px;letter-spacing:-0.6px"><span style="color:#606366">57</span></div>
<div class="t m" style="left:314.50px;top:176.10px;font-size:20px;line-height:34px;letter-spacing:-0.6px"><span style="color:#606366">58</span></div>
<div class="t m" style="left:314.50px;top:209.86px;font-size:20px;line-height:34px;letter-spacing:-0.6px"><span style="color:#606366">59</span></div>
<div class="t m" style="left:314.50px;top:243.62px;font-size:20px;line-height:34px;letter-spacing:-0.6px"><span style="color:#606366">60</span></div>
<div class="t m" style="left:314.50px;top:277.38px;font-size:20px;line-height:34px;letter-spacing:-0.6px"><span style="color:#606366">61</span></div>
<div class="t m" style="left:314.50px;top:311.13px;font-size:20px;line-height:34px;letter-spacing:-0.6px"><span style="color:#606366">62</span></div>
<div class="t m" style="left:314.50px;top:344.89px;font-size:20px;line-height:34px;letter-spacing:-0.6px"><span style="color:#606366">63</span></div>
<div class="t m" style="left:314.50px;top:378.65px;font-size:20px;line-height:34px;letter-spacing:-0.6px"><span style="color:#606366">64</span></div>
<div class="t m" style="left:314.50px;top:412.41px;font-size:20px;line-height:34px;letter-spacing:-0.6px"><span style="color:#a4a3a3">65</span></div>
<div class="t m" style="left:314.50px;top:446.17px;font-size:20px;line-height:34px;letter-spacing:-0.6px"><span style="color:#606366">66</span></div>
<div class="t m" style="left:314.50px;top:479.93px;font-size:20px;line-height:34px;letter-spacing:-0.6px"><span style="color:#606366">67</span></div>
<div class="a" style="left:391px;top:106px;width:1px;height:490px;background:#555555"></div>
<svg class="a" style="left:384px;top:115.6px" width="15" height="19" viewBox="0 0 15 19"><path d="M0.5,0.5 V12 L7.5,18.5 L14.5,12 V0.5 Z" fill="#313335" stroke="#5a5d5f" stroke-width="1"/><path d="M4,7.5 H11" stroke="#6e7173" stroke-width="1"/></svg>
<svg class="a" style="left:384px;top:215.88px" width="15" height="19" viewBox="0 0 15 19"><path d="M0.5,18.5 V7 L7.5,0.5 L14.5,7 V18.5 Z" fill="#313335" stroke="#5a5d5f" stroke-width="1"/><path d="M4,11.5 H11" stroke="#6e7173" stroke-width="1"/></svg>
<svg class="a" style="left:384px;top:318.15999999999997px" width="15" height="19" viewBox="0 0 15 19"><path d="M0.5,0.5 V12 L7.5,18.5 L14.5,12 V0.5 Z" fill="#313335" stroke="#5a5d5f" stroke-width="1"/><path d="M4,7.5 H11" stroke="#6e7173" stroke-width="1"/></svg>
<svg class="a" style="left:384px;top:418.43999999999994px" width="15" height="19" viewBox="0 0 15 19"><path d="M0.5,18.5 V7 L7.5,0.5 L14.5,7 V18.5 Z" fill="#313335" stroke="#5a5d5f" stroke-width="1"/><path d="M4,11.5 H11" stroke="#6e7173" stroke-width="1"/></svg>
<div class="a" style="left:378px;top:308px;width:2px;height:136px;background:#44685a"></div>
<svg class="a" style="left:345px;top:113.1px" width="23" height="23" viewBox="0 0 23 23"><circle cx="10" cy="10" r="9.3" fill="#599640"/><path d="M3,3.5 L11,11.5" stroke="#313335" stroke-width="1.8"/><circle cx="15.2" cy="15.5" r="7.2" fill="#313335"/><circle cx="15.2" cy="15.5" r="6.2" fill="#a9b4bc"/><circle cx="15.2" cy="15.5" r="4.9" fill="none" stroke="#313335" stroke-width="0.7"/><path d="M12.5,12.5 Q14,11.5 16,12 Q18,11 19,12.5 Q19.5,15 18.5,17 Q17.5,15.5 16,14.5 Q14,14 12.5,12.5 Z M11,14.5 Q12,17 14,19.5 Q12,19 11,17 Z" fill="#313335"/></svg>
<svg class="a" style="left:345px;top:315.65999999999997px" width="23" height="23" viewBox="0 0 23 23"><circle cx="10" cy="10" r="9.3" fill="#599640"/><path d="M3,3.5 L11,11.5" stroke="#313335" stroke-width="1.8"/><circle cx="15.2" cy="15.5" r="7.2" fill="#313335"/><circle cx="15.2" cy="15.5" r="6.2" fill="#a9b4bc"/><circle cx="15.2" cy="15.5" r="4.9" fill="none" stroke="#313335" stroke-width="0.7"/><path d="M12.5,12.5 Q14,11.5 16,12 Q18,11 19,12.5 Q19.5,15 18.5,17 Q17.5,15.5 16,14.5 Q14,14 12.5,12.5 Z M11,14.5 Q12,17 14,19.5 Q12,19 11,17 Z" fill="#313335"/></svg>
<div class="a" style="left:445px;top:141.6px;width:1px;height:68px;background:#393b3d"></div>
<div class="a" style="left:445px;top:344.15999999999997px;width:1px;height:68px;background:#393b3d"></div>
<div class="t m" style="left:402.00px;top:108.58px;font-size:20px;line-height:34px"><span style="color:#a9b7c6">    </span><span style="color:#cc7832">public </span><span style="color:#a9b7c6">String </span><span style="color:#ffc66d">dateparam</span><span style="color:#a9b7c6">(</span><span style="color:#bbb529">@DateTimeFormat</span><span style="color:#a9b7c6">(pattern = </span></div>
<div class="t m" style="left:402.00px;top:142.34px;font-size:20px;line-height:34px"><span style="color:#a9b7c6">        System.</span><span style="color:#9876aa;font-style:italic">out</span><span style="color:#a9b7c6">.println(updatetime)</span><span style="color:#cc7832">;</span></div>
<div class="t m" style="left:402.00px;top:176.10px;font-size:20px;line-height:34px"><span style="color:#a9b7c6">        </span><span style="color:#cc7832">return </span><span style="color:#6a8759">"OK"</span><span style="color:#cc7832">;</span></div>
<div class="t m" style="left:402.00px;top:209.86px;font-size:20px;line-height:34px"><span style="color:#a9b7c6">    }</span></div>
<div class="t m" style="left:402.00px;top:277.38px;font-size:20px;line-height:34px"><span style="color:#a9b7c6">    </span><span style="color:#bbb529">@RequestMapping</span><span style="color:#a9b7c6">(</span></div>
<div class="t m" style="left:680.00px;top:277.38px;font-size:20px;line-height:34px"><span style="color:#6a8759">"</span><span style="color:#a9b7c6">/</span><span style="color:#6a8759">jsonparam"</span><span style="color:#a9b7c6">)</span></div>
<div class="t m" style="left:402.00px;top:311.13px;font-size:20px;line-height:34px"><span style="color:#a9b7c6">    </span><span style="color:#cc7832">public </span><span style="color:#a9b7c6">String </span><span style="color:#ffc66d">jsonparam</span><span style="color:#a9b7c6">(</span><span style="color:#bbb529">@RequestBody </span><span style="color:#a9b7c6">user u)</span></div>
<div class="t m" style="left:402.00px;top:344.89px;font-size:20px;line-height:34px"><span style="color:#a9b7c6">        System.</span><span style="color:#9876aa;font-style:italic">out</span><span style="color:#a9b7c6">.println(u)</span><span style="color:#cc7832">;</span></div>
<div class="t m" style="left:402.00px;top:378.65px;font-size:20px;line-height:34px"><span style="color:#a9b7c6">        </span><span style="color:#cc7832">return </span><span style="color:#6a8759">"OK"</span><span style="color:#cc7832">;</span></div>
<div class="a" style="left:449px;top:411px;width:12px;height:34px;background:#3b514d"></div>
<div class="a" style="left:978px;top:310px;width:12px;height:34px;background:#3b514d"></div>
<div class="t m" style="left:402.00px;top:412.41px;font-size:20px;line-height:34px"><span style="color:#a9b7c6">    </span><span style="color:#ffef28">}</span></div>
<div class="t m" style="left:978.00px;top:311.13px;font-size:20px;line-height:34px"><span style="color:#ffef28">{</span></div>
<div class="t m" style="left:402.00px;top:446.17px;font-size:20px;line-height:34px"><span style="color:#a9b7c6">}</span></div>
<div class="a" style="left:641px;top:282px;width:37px;height:20px;background:#3b3d3f;border-radius:4px"></div>
<svg class="a" style="left:643px;top:283px" width="34" height="18" viewBox="0 0 34 18"><circle cx="9" cy="9" r="7.5" fill="#8c8f91"/><path d="M4,5 Q7,4 8,6.5 Q9,9 7,10.5 Q6,12 6.5,15 M11,2.5 Q12,5 15,5.5 M13,11 Q12,13 13.5,15" fill="none" stroke="#3b3d3f" stroke-width="1.6"/><polyline points="22,7 26.5,11 31,7" fill="none" stroke="#8c8f91" stroke-width="1.5"/></svg>
<svg class="a" style="left:616px;top:133.1px" width="110" height="4" viewBox="0 0 110 4"><polyline points="0.0,0.5 2.0,3.0 4.0,0.5 6.0,3.0 8.0,0.5 10.0,3.0 12.0,0.5 14.0,3.0 16.0,0.5 18.0,3.0 20.0,0.5 22.0,3.0 24.0,0.5 26.0,3.0 28.0,0.5 30.0,3.0 32.0,0.5 34.0,3.0 36.0,0.5 38.0,3.0 40.0,0.5 42.0,3.0 44.0,0.5 46.0,3.0 48.0,0.5 50.0,3.0 52.0,0.5 54.0,3.0 56.0,0.5 58.0,3.0 60.0,0.5 62.0,3.0 64.0,0.5 66.0,3.0 68.0,0.5 70.0,3.0 72.0,0.5 74.0,3.0 76.0,0.5 78.0,3.0 80.0,0.5 82.0,3.0 84.0,0.5 86.0,3.0 88.0,0.5 90.0,3.0 92.0,0.5 94.0,3.0 96.0,0.5 98.0,3.0 100.0,0.5 102.0,3.0 104.0,0.5 106.0,3.0 108.0,0.5" fill="none" stroke="#5c8a4f" stroke-width="1"/></svg>
<svg class="a" style="left:704px;top:301.9px" width="106" height="4" viewBox="0 0 106 4"><polyline points="0.0,0.5 2.0,3.0 4.0,0.5 6.0,3.0 8.0,0.5 10.0,3.0 12.0,0.5 14.0,3.0 16.0,0.5 18.0,3.0 20.0,0.5 22.0,3.0 24.0,0.5 26.0,3.0 28.0,0.5 30.0,3.0 32.0,0.5 34.0,3.0 36.0,0.5 38.0,3.0 40.0,0.5 42.0,3.0 44.0,0.5 46.0,3.0 48.0,0.5 50.0,3.0 52.0,0.5 54.0,3.0 56.0,0.5 58.0,3.0 60.0,0.5 62.0,3.0 64.0,0.5 66.0,3.0 68.0,0.5 70.0,3.0 72.0,0.5 74.0,3.0 76.0,0.5 78.0,3.0 80.0,0.5 82.0,3.0 84.0,0.5 86.0,3.0 88.0,0.5 90.0,3.0 92.0,0.5 94.0,3.0 96.0,0.5 98.0,3.0 100.0,0.5 102.0,3.0 104.0,0.5" fill="none" stroke="#5c8a4f" stroke-width="1"/></svg>
<svg class="a" style="left:616px;top:335.65999999999997px" width="110" height="4" viewBox="0 0 110 4"><polyline points="0.0,0.5 2.0,3.0 4.0,0.5 6.0,3.0 8.0,0.5 10.0,3.0 12.0,0.5 14.0,3.0 16.0,0.5 18.0,3.0 20.0,0.5 22.0,3.0 24.0,0.5 26.0,3.0 28.0,0.5 30.0,3.0 32.0,0.5 34.0,3.0 36.0,0.5 38.0,3.0 40.0,0.5 42.0,3.0 44.0,0.5 46.0,3.0 48.0,0.5 50.0,3.0 52.0,0.5 54.0,3.0 56.0,0.5 58.0,3.0 60.0,0.5 62.0,3.0 64.0,0.5 66.0,3.0 68.0,0.5 70.0,3.0 72.0,0.5 74.0,3.0 76.0,0.5 78.0,3.0 80.0,0.5 82.0,3.0 84.0,0.5 86.0,3.0 88.0,0.5 90.0,3.0 92.0,0.5 94.0,3.0 96.0,0.5 98.0,3.0 100.0,0.5 102.0,3.0 104.0,0.5 106.0,3.0 108.0,0.5" fill="none" stroke="#5c8a4f" stroke-width="1"/></svg>
<div class="a" style="left:692px;top:302.4px;width:12px;height:1px;background:#6b7a88"></div>
<div class="a" style="left:909px;top:106px;width:182px;height:36px;background:#2b2b2b"></div>
<svg class="a" style="left:919px;top:115.5px" width="16" height="14" viewBox="0 0 16 14"><polygon points="7.5,0.3 15,13.8 0,13.8" fill="#d9a32f"/><rect x="6.6" y="4.5" width="1.8" height="5" fill="#2b2b2b"/><rect x="6.6" y="10.6" width="1.8" height="1.8" fill="#2b2b2b"/></svg>
<div class="t" style="left:939.50px;top:113.30px;font-size:15px;color:#a9b7c6;line-height:24px;letter-spacing:-1.343px">1</div>
<svg class="a" style="left:957px;top:115.5px" width="16" height="14" viewBox="0 0 16 14"><polygon points="7.5,0.3 15,13.8 0,13.8" fill="#807b66"/><rect x="6.6" y="4.5" width="1.8" height="5" fill="#2b2b2b"/><rect x="6.6" y="10.6" width="1.8" height="1.8" fill="#2b2b2b"/></svg>
<div class="t" style="left:977.50px;top:113.30px;font-size:15px;color:#a9b7c6;line-height:24px;letter-spacing:-1.343px">1</div>
<svg class="a" style="left:994px;top:116px" width="16" height="17" viewBox="0 0 16 17"><polyline points="1,6 5.5,10.5 14.5,1" fill="none" stroke="#4e9c57" stroke-width="2.6"/><polyline points="0.5,15.5 3,12.5 5.5,15.5 8,12.5 10.5,15.5 13,12.5 15,14.5" fill="none" stroke="#4e9c57" stroke-width="1.5"/></svg>
<div class="t" style="left:1015.50px;top:113.30px;font-size:15px;color:#a9b7c6;line-height:24px;letter-spacing:-0.343px">17</div>
<svg class="a" style="left:1044px;top:119px" width="12" height="8" viewBox="0 0 12 8"><polyline points="1,7 6,2 11,7" fill="none" stroke="#afb1b3" stroke-width="1.6"/></svg>
<svg class="a" style="left:1070px;top:121px" width="12" height="8" viewBox="0 0 12 8"><polyline points="1,1 6,6 11,1" fill="none" stroke="#afb1b3" stroke-width="1.6"/></svg>
<svg class="a" style="left:1086px;top:120px" width="5" height="16" viewBox="0 0 5 16"><path d="M0.5,1 Q4.5,8 0.5,15" fill="none" stroke="#8a9a3a" stroke-width="1.5"/></svg>
<div class="a" style="left:1074px;top:195px;width:16px;height:2px;background:#d9a32f"></div>
<div class="a" style="left:1074px;top:227px;width:16px;height:2px;background:#807b66"></div>
<div class="a" style="left:1079px;top:487px;width:10px;height:90px;background:#4b4d4f"></div>
<div class="a" style="left:402px;top:584px;width:357px;height:10px;background:#4b4d4f"></div>
<svg class="a" style="left:1098px;top:81px" width="16" height="17" viewBox="0 0 16 17"><path d="M7,1 Q12,1 12.5,7 L13,11 L15,14 H0 L2,11 L2.5,7 Q3,1 7,1 Z" fill="#afb1b3"/><rect x="5" y="14.5" width="5" height="2" fill="#afb1b3"/><circle cx="12.5" cy="3.5" r="3.5" fill="#3d3f41"/><circle cx="12.5" cy="3.5" r="2.6" fill="#3592c4"/></svg>
<div class="t" style="left:1104px;top:116.4px;width:0;height:0"><div style="position:absolute;left:0;top:0;transform:translate(-50%,-50%) rotate(90deg);font-size:13px;line-height:15px;color:#bbbbbb;white-space:nowrap"><span style="font-size:13px;position:relative;top:-0.5px">通知</span></div></div>
<svg class="a" style="left:1097px;top:153px" width="16" height="17" viewBox="0 0 16 17"><ellipse cx="8" cy="3" rx="7" ry="2.6" fill="#afb1b3"/><path d="M1,5.2 Q8,8.6 15,5.2 V7.6 Q8,11 1,7.6 Z M1,9.6 Q8,13 15,9.6 V12 Q8,15.4 1,12 Z M1,13.2 Q8,16.6 15,13.2 V13.8 Q8,17.2 1,13.8 Z" fill="#afb1b3"/></svg>
<div class="t" style="left:1104px;top:193.7px;width:0;height:0"><div style="position:absolute;left:0;top:0;transform:translate(-50%,-50%) rotate(90deg);font-size:13px;line-height:15px;color:#bbbbbb;white-space:nowrap"><span style="font-size:13px;position:relative;top:-0.5px">数据库</span></div></div>
<svg class="a" style="left:1096px;top:238px" width="18" height="16" viewBox="0 0 18 16"><text x="0" y="14" font-size="18" font-family="Liberation Sans" font-weight="bold" font-style="italic" fill="#afb1b3">m</text></svg>
<div class="t" style="left:1104.5px;top:280px;width:0;height:0"><div style="position:absolute;left:0;top:0;transform:translate(-50%,-50%) rotate(90deg);font-size:14px;line-height:16px;color:#bbbbbb;white-space:nowrap">Maven</div></div>
<svg class="a" style="left:1097px;top:324px" width="16" height="17" viewBox="0 0 16 17"><circle cx="8" cy="3" r="2.8" fill="#afb1b3"/><circle cx="3" cy="13.5" r="2.8" fill="#afb1b3"/><circle cx="13" cy="13.5" r="2.8" fill="#afb1b3"/><path d="M8,3 L3,13.5 M8,3 L13,13.5" stroke="#afb1b3" stroke-width="1.5"/></svg>
<div class="t" style="left:1104px;top:359px;width:0;height:0"><div style="position:absolute;left:0;top:0;transform:translate(-50%,-50%) rotate(90deg);font-size:13px;line-height:15px;color:#bbbbbb;white-space:nowrap"><span style="font-size:13px;position:relative;top:-0.5px">端点</span></div></div>
<div class="t" style="left:36.00px;top:602.30px;font-size:15px;color:#bbbbbb;line-height:24px;letter-spacing:0.278px"><span style="font-size:14.5px;position:relative;top:-0.5px">运行</span>:</div>
<svg class="a" style="left:94px;top:605px" width="22" height="21" viewBox="0 0 22 21"><path d="M1,13 Q2,6 10,4.5 Q15,3.5 18.5,1 Q19.5,6 18.5,9 L10,9 L8,16 Q3,17 1,13 Z" fill="#5b9b49"/><polygon points="13.5,8.5 19,11.5 19,17.5 13.5,20.5 8,17.5 8,11.5" fill="#3c3f41"/><polygon points="13.5,9.5 18,12 18,17 13.5,19.5 9,17 9,12" fill="#a4adb3"/><path d="M11.3,13 A2.8,2.8 0 1,0 15.7,13" fill="none" stroke="#4a4d50" stroke-width="1.1"/><path d="M13.5,11 V14.5" stroke="#4a4d50" stroke-width="1.1"/><circle cx="17.2" cy="16" r="2.6" fill="#1fd41f"/></svg>
<div class="t" style="left:119.00px;top:602.30px;font-size:15px;color:#bbbbbb;line-height:24px;letter-spacing:0.973px">SpringbootWebStudy01Application</div>
<svg class="a" style="left:389px;top:609.0px" width="11" height="11" viewBox="0 0 11 11"><path d="M0.8,0.8 L10.2,10.2 M10.2,0.8 L0.8,10.2" stroke="#6e7173" stroke-width="1.3"/></svg>
<div class="a" style="left:79px;top:627px;width:334px;height:4px;background:#6e7275;border-radius:2px"></div>
<div class="a" style="left:29px;top:630px;width:1062px;height:1px;background:#2f3133"></div>
<svg class="a" style="left:1032px;top:604px" width="20" height="20" viewBox="0 0 20 20"><g transform="translate(10 10)"><rect x="-2.1" y="-8.2" width="4.2" height="5" rx="0.8" fill="#aeb0b2" transform="rotate(0)"/><rect x="-2.1" y="-8.2" width="4.2" height="5" rx="0.8" fill="#aeb0b2" transform="rotate(60)"/><rect x="-2.1" y="-8.2" width="4.2" height="5" rx="0.8" fill="#aeb0b2" transform="rotate(120)"/><rect x="-2.1" y="-8.2" width="4.2" height="5" rx="0.8" fill="#aeb0b2" transform="rotate(180)"/><rect x="-2.1" y="-8.2" width="4.2" height="5" rx="0.8" fill="#aeb0b2" transform="rotate(240)"/><rect x="-2.1" y="-8.2" width="4.2" height="5" rx="0.8" fill="#aeb0b2" transform="rotate(300)"/><circle cx="0" cy="0" r="6.3" fill="#aeb0b2"/><circle cx="0" cy="0" r="2.8" fill="#3c3f41"/></g></svg>
<div class="a" style="left:1067px;top:613px;width:15px;height:2.4px;background:#aeb0b2"></div>
<div class="a" style="left:63px;top:631px;width:1px;height:285px;background:#2f3133"></div>
<svg class="a" style="left:36px;top:640px" width="20" height="20" viewBox="0 0 20 20"><path d="M9,17 A7,7 0 1,1 14,5" fill="none" stroke="#4e9c57" stroke-width="2.6"/><polygon points="11,0 18,4 12,9" fill="#4e9c57"/><rect x="11" y="11" width="7" height="7" fill="#aeb0b2"/></svg>
<svg class="a" style="left:37px;top:672px" width="19" height="19" viewBox="0 0 19 19"><path d="M2.5,16.5 L10,9" stroke="#aeb0b2" stroke-width="3.6" stroke-linecap="round"/><path d="M8.5,10.5 A5.5,5.5 0 0,1 13,1.5 L10.5,4.5 L11.5,7.5 L14.5,8.5 L17.5,6 A5.5,5.5 0 0,1 8.5,10.5 Z" fill="#aeb0b2"/></svg>
<div class="a" style="left:37px;top:703px;width:20px;height:1px;background:#515456"></div>
<div class="a" style="left:39px;top:715px;width:14px;height:14px;background:#c75450"></div>
<svg class="a" style="left:36px;top:743px" width="22" height="22" viewBox="0 0 22 22"><ellipse cx="9" cy="10" rx="5" ry="6.5" fill="#4e9c57"/><path d="M2,4.5 L5,6.5 M16,4.5 L13,6.5 M1,10 H4 M17,10 H14 M2,15.5 L5,13.5 M16,15.5 L13,13.5 M5,1 L7,3.5 M13,1 L11,3.5" stroke="#4e9c57" stroke-width="1.7"/><path d="M4,9 H14 M4,12.5 H14" stroke="#3c3f41" stroke-width="1.1"/><polygon points="12,12 21,12 21,21 12,21" fill="#3c3f41"/><path d="M13,20 L20,13 M15,13 H20 V18" fill="none" stroke="#aeb0b2" stroke-width="1.8"/></svg>
<svg class="a" style="left:36px;top:779px" width="20" height="17" viewBox="0 0 20 17"><path d="M0,3.5 H5 L7,0.5 H13 L15,3.5 H20 V16.5 H0 Z" fill="#aeb0b2"/><circle cx="10" cy="10" r="3.8" fill="#3c3f41"/><circle cx="10" cy="10" r="2.2" fill="#aeb0b2"/></svg>
<svg class="a" style="left:36px;top:810px" width="21" height="21" viewBox="0 0 21 21"><path d="M8,1 H19 V20 H8 V16 H10.5 V17.5 H16.5 V3.5 H10.5 V5 H8 Z" fill="#aeb0b2"/><path d="M1,10.5 H12" stroke="#e05555" stroke-width="2.4"/><polygon points="9,5.5 14.5,10.5 9,15.5" fill="#e05555"/></svg>
<div class="a" style="left:37px;top:839px;width:20px;height:1px;background:#515456"></div>
<svg class="a" style="left:37px;top:853px" width="20" height="16" viewBox="0 0 20 16"><rect x="0" y="0" width="9" height="7" fill="#aeb0b2"/><rect x="10.5" y="0" width="9" height="7" fill="#aeb0b2"/><rect x="0" y="8.5" width="19.5" height="7" fill="#aeb0b2"/></svg>
<div class="a" style="left:37px;top:880px;width:20px;height:1px;background:#515456"></div>
<svg class="a" style="left:40px;top:897px" width="12" height="9" viewBox="0 0 12 9"><polyline points="1,1 4.5,4.5 1,8" fill="none" stroke="#aeb0b2" stroke-width="1.1"/><polyline points="7,1 10.5,4.5 7,8" fill="none" stroke="#aeb0b2" stroke-width="1.1"/></svg>
<div class="a" style="left:100px;top:667px;width:1px;height:249px;background:#2f3133"></div>
<svg class="a" style="left:73px;top:676px" width="18" height="18" viewBox="0 0 18 18"><path d="M9,3 V17" stroke="#aeb0b2" stroke-width="1.8"/><polyline points="3,9 9,3 15,9" fill="none" stroke="#aeb0b2" stroke-width="1.8"/></svg>
<svg class="a" style="left:73px;top:709px" width="18" height="18" viewBox="0 0 18 18"><path d="M9,1 V15" stroke="#aeb0b2" stroke-width="1.8"/><polyline points="3,9 9,15 15,9" fill="none" stroke="#aeb0b2" stroke-width="1.8"/></svg>
<svg class="a" style="left:73px;top:742px" width="18" height="18" viewBox="0 0 18 18"><path d="M1,2 H16 M1,8 H14 Q17.5,8 17.5,11.5 Q17.5,15 14,15 H9" fill="none" stroke="#aeb0b2" stroke-width="1.8"/><polygon points="8,11.5 12,15 8,18.5" fill="#aeb0b2"/><path d="M1,14 H4" stroke="#aeb0b2" stroke-width="1.8"/></svg>
<div class="a" style="left:68px;top:768px;width:28px;height:28px;background:#4e5254;border-radius:4px"></div>
<svg class="a" style="left:73px;top:773px" width="18" height="18" viewBox="0 0 18 18"><path d="M1,2.5 H6 M1,7.5 H6 M1,15.5 H17" stroke="#aeb0b2" stroke-width="1.8"/><path d="M12,1 V11" stroke="#aeb0b2" stroke-width="1.8"/><polyline points="8,7.5 12,11.5 16,7.5" fill="none" stroke="#aeb0b2" stroke-width="1.8"/></svg>
<svg class="a" style="left:73px;top:806px" width="19" height="18" viewBox="0 0 19 18"><rect x="4" y="0" width="11" height="5" fill="#aeb0b2"/><rect x="0" y="6" width="19" height="7.5" rx="1" fill="#aeb0b2"/><rect x="4" y="11" width="11" height="6" fill="#3c3f41"/><rect x="5.5" y="12.5" width="8" height="5" fill="#aeb0b2"/></svg>
<svg class="a" style="left:75px;top:838px" width="14" height="18" viewBox="0 0 14 18"><rect x="0" y="2" width="14" height="2" fill="#aeb0b2"/><rect x="4.5" y="0" width="5" height="2" fill="#aeb0b2"/><path d="M1.5,5.5 H12.5 L11.5,17.5 H2.5 Z" fill="#aeb0b2"/></svg>
<div class="t" style="left:81.00px;top:638.30px;font-size:15px;color:#bbbbbb;line-height:24px"><span style="font-size:13.5px;position:relative;top:-0.5px">控制台</span></div>
<div class="a" style="left:65px;top:664px;width:72px;height:3px;background:#6e7275"></div>
<div class="a" style="left:64px;top:666px;width:1027px;height:1px;background:#2f3133"></div>
<svg class="a" style="left:151px;top:640px" width="22" height="20" viewBox="0 0 22 20"><path d="M11.8,3 L4.4,14.5 M11.8,3 L15.4,14.5 M1.3,8.5 L4.4,14.5 M18.6,8.5 L15.4,14.5" fill="none" stroke="#c35b28" stroke-width="1.6"/><circle cx="11.8" cy="3.2" r="3.2" fill="#c35b28"/><circle cx="4.4" cy="14.5" r="3.3" fill="#c35b28"/><circle cx="15.4" cy="14.5" r="3.3" fill="#c35b28"/></svg>
<div class="t" style="left:176.30px;top:638.30px;font-size:15px;color:#bbbbbb;line-height:24px;letter-spacing:-0.270px">Actuator</div>
<div class="a" style="left:101px;top:667px;width:990px;height:249px;background:#2b2b2b"></div>
<div style="position:absolute;left:101px;top:667px;width:990px;height:249px;overflow:hidden">
<div class="t m" style="left:16.00px;top:-3.43px;font-size:20px;line-height:34px"><span style="color:#bbbbbb">2024-04-25 14:55:24.894  </span><span style="color:#5e9f35">INFO</span><span style="color:#bbbbbb"> </span><span style="color:#b175c8">20608</span><span style="color:#bbbbbb"> --- [           main] </span><span style="color:#21a5a5">c.e.s.SpringbootWebStudy01Application</span></div>
<div class="t m" style="left:16.00px;top:30.47px;font-size:20px;line-height:34px"><span style="color:#bbbbbb">2024-04-25 14:55:27.284  </span><span style="color:#5e9f35">INFO</span><span style="color:#bbbbbb"> </span><span style="color:#b175c8">20608</span><span style="color:#bbbbbb"> --- [nio-8080-exec-2] </span><span style="color:#21a5a5">o.a.c.c.C.[Tomcat].[localhost].[/]</span></div>
<div class="t m" style="left:16.00px;top:64.37px;font-size:20px;line-height:34px"><span style="color:#bbbbbb">2024-04-25 14:55:27.284  </span><span style="color:#5e9f35">INFO</span><span style="color:#bbbbbb"> </span><span style="color:#b175c8">20608</span><span style="color:#bbbbbb"> --- [nio-8080-exec-2] </span><span style="color:#21a5a5">o.s.web.servlet.DispatcherServlet</span></div>
<div class="t m" style="left:16.00px;top:98.27px;font-size:20px;line-height:34px"><span style="color:#bbbbbb">2024-04-25 14:55:27.285  </span><span style="color:#5e9f35">INFO</span><span style="color:#bbbbbb"> </span><span style="color:#b175c8">20608</span><span style="color:#bbbbbb"> --- [nio-8080-exec-2] </span><span style="color:#21a5a5">o.s.web.servlet.DispatcherServlet</span></div>
<div class="t m" style="left:16.00px;top:132.17px;font-size:20px;line-height:34px"><span style="color:#bbbbbb">user{name = zw, age = 18, add = null}</span></div>
</div>
<div class="t m" style="left:117.00px;top:833.07px;font-size:20px;line-height:34px"><span style="color:#bbbbbb">user{name = zw, age = 18, add = address{province = </span><span style="color:#bbbbbb;font-size:20px;letter-spacing:2.4px">北京</span><span style="color:#bbbbbb">, citi = </span><span style="color:#bbbbbb;font-size:20px;letter-spacing:2.4px">北京</span><span style="color:#bbbbbb">}}</span></div>
<div class="a" style="left:118px;top:903px;width:187px;height:10px;background:#4b4d4f"></div>
<div class="a" style="left:1079px;top:848px;width:10px;height:60px;background:#4b4d4f"></div>
<div class="a" style="left:1px;top:915px;width:1117px;height:1px;background:#2f3133"></div>
<div class="a" style="left:1px;top:942px;width:1117px;height:1px;background:#4a4d4f"></div>
<div class="a" style="left:126px;top:916px;width:70px;height:26px;background:#2e3032"></div>
<svg class="a" style="left:42px;top:921px" width="13" height="17" viewBox="0 0 13 17"><circle cx="3" cy="3" r="2.3" fill="#afb1b3"/><circle cx="3" cy="14" r="2.3" fill="#afb1b3"/><circle cx="10.5" cy="5" r="2.3" fill="#afb1b3"/><path d="M3,3 V14 M10.5,5 Q10.5,10 3,12" fill="none" stroke="#afb1b3" stroke-width="1.8"/></svg>
<div class="t" style="left:62.00px;top:918.60px;font-size:15px;color:#bbbbbb;line-height:24px"><span style="font-size:13px;position:relative;top:-0.5px">版本控制</span></div>
<svg class="a" style="left:138px;top:922px" width="16" height="16" viewBox="0 0 16 16"><polygon points="1,1 12,7.5 1,14" fill="#afb1b3"/><circle cx="12.5" cy="12.5" r="3" fill="#3c3f41"/><circle cx="12.5" cy="12.5" r="2.4" fill="#1fd41f"/></svg>
<div class="t" style="left:158.00px;top:918.60px;font-size:15px;color:#ffffff;line-height:24px"><span style="font-size:13.5px;position:relative;top:-0.5px">运行</span></div>
<svg class="a" style="left:210px;top:922px" width="16" height="14" viewBox="0 0 16 14"><path d="M0,2 H2.5 M0,7 H2.5 M0,12 H2.5 M4.5,2 H15 M4.5,7 H15 M4.5,12 H15" stroke="#afb1b3" stroke-width="2.2"/></svg>
<div class="t" style="left:230.00px;top:918.60px;font-size:15px;color:#bbbbbb;line-height:24px;letter-spacing:-1.083px">TODO</div>
<svg class="a" style="left:291px;top:921px" width="15" height="15" viewBox="0 0 15 15"><circle cx="7.5" cy="7.5" r="7.2" fill="#afb1b3"/><rect x="6.3" y="3" width="2.4" height="6" fill="#3c3f41"/><rect x="6.3" y="10.3" width="2.4" height="2.4" fill="#3c3f41"/></svg>
<div class="t" style="left:312.00px;top:918.60px;font-size:15px;color:#bbbbbb;line-height:24px"><span style="font-size:13.5px;position:relative;top:-0.5px">问题</span></div>
<svg class="a" style="left:361px;top:922px" width="15" height="14" viewBox="0 0 15 14"><rect x="0" y="0" width="15" height="14" fill="#afb1b3"/><polyline points="3,3.5 6.5,7 3,10.5" fill="none" stroke="#3c3f41" stroke-width="1.5"/><path d="M7.5,11 H12" stroke="#3c3f41" stroke-width="1.5"/></svg>
<div class="t" style="left:382.00px;top:918.60px;font-size:15px;color:#bbbbbb;line-height:24px"><span style="font-size:13.5px;position:relative;top:-0.5px">终端</span></div>
<svg class="a" style="left:431px;top:920px" width="18" height="18" viewBox="0 0 18 18"><path d="M9,15 A6.5,6.5 0 1,1 14,6" fill="none" stroke="#afb1b3" stroke-width="1.9"/><path d="M7.5,4.5 V8.5 L10,10" fill="none" stroke="#afb1b3" stroke-width="1.6"/><polygon points="9,8 17,12.5 9,17" fill="#afb1b3" stroke="#3c3f41" stroke-width="1"/></svg>
<div class="t" style="left:454.00px;top:918.60px;font-size:15px;color:#bbbbbb;line-height:24px;letter-spacing:-0.439px">Profiler</div>
<svg class="a" style="left:520px;top:921px" width="16" height="16" viewBox="0 0 16 16"><polygon points="4,0.5 12,0.5 16,8 12,15.5 4,15.5 0,8" fill="#afb1b3"/><polygon points="6,4.5 11.5,8 6,11.5" fill="#3c3f41"/></svg>
<div class="t" style="left:541.00px;top:918.60px;font-size:15px;color:#bbbbbb;line-height:24px"><span style="font-size:13.5px;position:relative;top:-0.5px">服务</span></div>
<svg class="a" style="left:590px;top:921px" width="18" height="18" viewBox="0 0 18 18"><polygon points="1,4.5 6.5,0.5 10,3 8.5,5 17,14 14.5,16.5 6,7.5 4,9" fill="#afb1b3"/></svg>
<div class="t" style="left:612.00px;top:918.60px;font-size:15px;color:#bbbbbb;line-height:24px"><span style="font-size:13.5px;position:relative;top:-0.5px">构建</span></div>
<svg class="a" style="left:663px;top:921px" width="18" height="17" viewBox="0 0 18 17"><polygon points="9,0.5 17,4.5 9,8.5 1,4.5" fill="#afb1b3"/><path d="M1,8 L9,12 L17,8 M1,11.5 L9,15.5 L17,11.5" fill="none" stroke="#afb1b3" stroke-width="1.8"/></svg>
<div class="t" style="left:686.00px;top:918.60px;font-size:15px;color:#bbbbbb;line-height:24px;letter-spacing:-0.826px">Dependencies</div>
<svg class="a" style="left:18px;top:946px" width="17" height="17" viewBox="0 0 17 17"><rect x="4.5" y="0.5" width="12" height="12" fill="none" stroke="#afb1b3" stroke-width="1.2"/><path d="M1.5,4 V15.5 H13" fill="none" stroke="#afb1b3" stroke-width="1.2"/></svg>
<div class="t" style="left:50.00px;top:943.80px;font-size:15px;color:#bbbbbb;line-height:24px;letter-spacing:0.632px"><span style="font-size:14.2px;position:relative;top:-0.5px">构建在</span> 839<span style="font-size:14.2px;position:relative;top:-0.5px">毫秒内成功完成</span> (1 <span style="font-size:14.2px;position:relative;top:-0.5px">分钟</span> <span style="font-size:14.2px;position:relative;top:-0.5px">之前</span>)</div>
<div class="t" style="left:861.00px;top:945.10px;font-size:15px;color:#bbbbbb;line-height:24px">65:6</div>
<div class="a" style="left:908px;top:937px;width:211px;height:32px;background:#ffffff"></div>
<svg class="a" style="left:867px;top:929px" width="46" height="40" viewBox="0 0 46 40"><g transform="rotate(-14 23 20)"><rect x="4" y="3" width="38" height="36" rx="7" fill="#f26522"/></g><path d="M33,11 Q27,7 19,9 Q11,11 13,17 Q15,22 25,22 Q32,23 30,28 Q27,33 15,30" fill="none" stroke="#fff" stroke-width="5" stroke-linecap="round"/></svg>
<div class="t" style="left:915.00px;top:946.80px;font-size:15px;color:#1b6dd8;line-height:24px;font-weight:bold"><span style="font-size:19px;position:relative;top:-0.5px">英</span></div>
<svg class="a" style="left:947px;top:946px" width="18" height="20" viewBox="0 0 18 20"><circle cx="4" cy="5" r="2" fill="#1b6dd8"/><path d="M13,9 Q14,14 10,17" fill="none" stroke="#1b6dd8" stroke-width="2.6" stroke-linecap="round"/></svg>
<svg class="a" style="left:976px;top:944px" width="18" height="22" viewBox="0 0 18 22"><rect x="5" y="1" width="8" height="13" rx="4" fill="#1b6dd8"/><path d="M2,10 Q2,17 9,17 Q16,17 16,10 M9,17 V21 M5,21 H13" fill="none" stroke="#1b6dd8" stroke-width="1.8"/></svg>
<svg class="a" style="left:1006px;top:946px" width="20" height="17" viewBox="0 0 20 17"><rect x="1" y="1" width="18" height="15" rx="2" fill="none" stroke="#1b6dd8" stroke-width="2"/><path d="M4,5 H16 M4,8.5 H16 M6,12 H14" stroke="#1b6dd8" stroke-width="1.8" stroke-dasharray="2 1.2"/></svg>
<svg class="a" style="left:1035px;top:943px" width="24" height="24" viewBox="0 0 24 24"><defs><linearGradient id="sh" x1="0" y1="0" x2="1" y2="1"><stop offset="0" stop-color="#ff5b6e"/><stop offset="0.5" stop-color="#b35cff"/><stop offset="1" stop-color="#4d7dff"/></linearGradient></defs><path d="M1,8 L7,3 Q11,6 15,3 L20,8 L17,11 L16,10 V21 H6 V10 L4,11 Z" fill="url(#sh)"/><circle cx="19" cy="4" r="3.5" fill="#f0433a"/></svg>
<svg class="a" style="left:1065px;top:945px" width="22" height="20" viewBox="0 0 22 20"><path d="M3,6 Q11,2 19,6 Q22,13 18,16 Q15,17 13,14 H9 Q7,17 4,16 Q0,13 3,6 Z" fill="#1b6dd8"/><circle cx="7.5" cy="9.5" r="1.6" fill="#fff"/><circle cx="14.5" cy="9.5" r="1.6" fill="#fff"/></svg>
<svg class="a" style="left:1096px;top:945px" width="19" height="19" viewBox="0 0 19 19"><rect x="1" y="1" width="7" height="7" rx="1.5" fill="#1b6dd8"/><rect x="11" y="1" width="7" height="7" rx="3.5" fill="#1b6dd8"/><rect x="1" y="11" width="7" height="7" rx="1.5" fill="#1b6dd8"/><rect x="11" y="11" width="7" height="7" rx="1.5" fill="#1b6dd8"/></svg>
</body></html>
